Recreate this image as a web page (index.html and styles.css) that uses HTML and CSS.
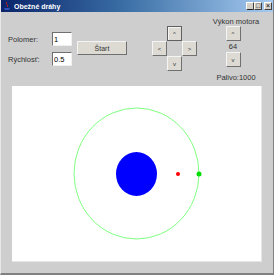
FILE: index.html
```html
<!DOCTYPE html>
<html lang="sk">
<head>
    <meta charset="UTF-8">
    <title>Obežné dráhy</title>
    <link rel="stylesheet" href="styles.css">
</head>
<body>
    <div class="window">
        <div class="titlebar">
            <svg class="app-icon" width="8" height="9" viewBox="0 0 8 9">
                <path d="M4 0 C2 2 6 3 4 5" stroke="#d02020" stroke-width="1" fill="none"/>
                <path d="M1 6 H7 L6 8 H2 Z" fill="#3050c0"/>
            </svg>
            <span class="title">Obežné dráhy</span>
            <div class="win-buttons">
                <span class="win-btn">_</span>
                <span class="win-btn">□</span>
                <span class="win-btn close">×</span>
            </div>
        </div>

        <div class="controls">
            <div class="inputs">
                <div class="form-row">
                    <label for="polomer">Polomer:</label>
                    <input type="text" id="polomer" value="1">
                </div>
                <div class="form-row">
                    <label for="rychlost">Rýchlosť:</label>
                    <input type="text" id="rychlost" value="0.5">
                </div>
            </div>
            <button class="btn start-btn">Štart</button>
            <div class="pad">
                <button class="btn small-btn up focused">^</button>
                <button class="btn small-btn left">&lt;</button>
                <button class="btn small-btn right">&gt;</button>
                <button class="btn small-btn down">v</button>
            </div>
            <div class="engine">
                <div class="engine-title">Výkon motora</div>
                <button class="btn small-btn shifted">^</button>
                <div class="engine-value shifted">64</div>
                <button class="btn small-btn shifted">v</button>
                <div class="fuel">Palivo:1000</div>
            </div>
        </div>

        <div class="canvas">
            <svg width="249" height="175" viewBox="0 0 249 175">
                <ellipse cx="124.5" cy="87.5" rx="62.5" ry="65.5" fill="none" stroke="#80ff80" stroke-width="1"/>
                <ellipse cx="124.5" cy="88" rx="20.5" ry="22" fill="#0000ff"/>
                <circle cx="166" cy="88" r="2" fill="#ff0000"/>
                <circle cx="187" cy="88" r="2.5" fill="#00dd00"/>
            </svg>
        </div>
    </div>
</body>
</html>
```

FILE: styles.css
```css
body {
    margin: 0;
    padding: 0;
    font-family: "Liberation Sans", Arial, sans-serif;
    font-size: 7.5px;
    background-color: #cecece;
}

.window {
    width: 274px;
    height: 275px;
    box-sizing: border-box;
    background-color: #cecece;
    border-left: 1px solid #e8e8e8;
    border-right: 1px solid #808080;
    border-bottom: 2px solid #808080;
    display: flex;
    flex-direction: column;
}

.titlebar {
    height: 12px;
    background: linear-gradient(to right, #0a246a, #3a6ea5 45%, #a6caf0);
    display: flex;
    align-items: center;
    padding-left: 2px;
    color: #fff;
}

.app-icon {
    margin-right: 3px;
}

.title {
    font-weight: bold;
    font-size: 7px;
}

.win-buttons {
    margin-left: auto;
    display: flex;
    margin-right: 1px;
}

.win-btn {
    width: 8px;
    height: 8px;
    box-sizing: border-box;
    background-color: #d4d0c8;
    border: 1px solid;
    border-color: #fff #404040 #404040 #fff;
    color: #000;
    font-size: 7px;
    line-height: 6px;
    text-align: center;
}

.win-btn.close {
    margin-left: 2px;
}

.controls {
    height: 74px;
    display: flex;
    align-items: flex-start;
}

.inputs {
    display: flex;
    flex-direction: column;
    gap: 6px;
    margin-top: 20px;
    margin-left: 7px;
}

.form-row {
    display: flex;
    align-items: center;
    height: 14px;
}

label {
    width: 44px;
    color: #333;
}

input {
    width: 20px;
    height: 14px;
    box-sizing: border-box;
    padding: 0 1px;
    border: 1px solid;
    border-color: #707070 #f0f0f0 #f0f0f0 #707070;
    font-family: inherit;
    font-size: 7.5px;
    background: #fff;
}

.btn {
    background-color: #dcdad2;
    border: 1px solid;
    border-color: #f4f4f4 #707070 #707070 #f4f4f4;
    box-sizing: border-box;
    padding: 0;
    font-family: inherit;
    font-size: 6px;
    color: #333;
}

.start-btn {
    width: 50px;
    height: 14px;
    margin-top: 29px;
    margin-left: 5px;
    font-size: 7px;
}

.pad {
    display: grid;
    grid-template-columns: 15px 15px 15px;
    grid-template-rows: 15px 15px 15px;
    margin-top: 14px;
    margin-left: 25px;
}

.small-btn {
    width: 15px;
    height: 15px;
}

.pad .up { grid-column: 2; grid-row: 1; }
.pad .left { grid-column: 1; grid-row: 2; }
.pad .right { grid-column: 3; grid-row: 2; }
.pad .down { grid-column: 2; grid-row: 3; }

.focused {
    border: 1px solid #606060;
    box-shadow: inset 1px 1px 0 #f4f4f4;
}

.engine {
    display: flex;
    flex-direction: column;
    align-items: center;
    width: 50px;
    margin-left: 14px;
    margin-top: 5px;
    color: #333;
}

.engine .shifted {
    margin-right: 6px;
}

.engine-title {
    height: 9px;
}

.engine-value {
    height: 11px;
    line-height: 11px;
}

.fuel {
    margin-top: 6px;
}

.canvas {
    margin-left: 11px;
    width: 249px;
    height: 175px;
    background: #fff;
    border-right: 1px solid #e6e6e6;
    border-bottom: 1px solid #e6e6e6;
}

.canvas svg {
    display: block;
}
```
